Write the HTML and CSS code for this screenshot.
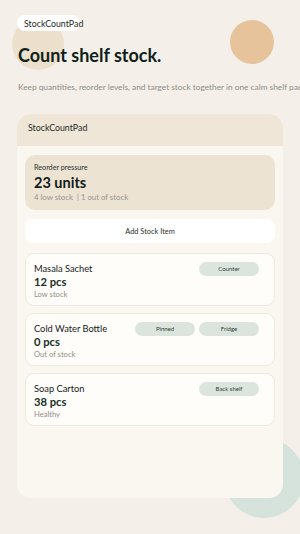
FILE: index.html
```html
<!DOCTYPE html>
<html>
<head>
<meta charset="utf-8">
<link rel="stylesheet" href="styles.css">
</head>
<body>
<div class="deco deco-a"></div>
<div class="deco deco-b"></div>
<div class="deco deco-c"></div>
<main class="page">
  <span class="brand">StockCountPad</span>
  <h1 class="title">Count shelf stock.</h1>
  <p class="lead">Keep quantities, reorder levels, and target stock together in one calm shelf pad.</p>
  <section class="card">
    <header class="card-head">StockCountPad</header>
    <div class="card-body">
      <div class="summary">
        <div class="summary-label">Reorder pressure</div>
        <div class="summary-value">23 units</div>
        <div class="summary-meta">4 low stock &nbsp;| 1 out of stock</div>
      </div>
      <button class="add-btn">Add Stock Item</button>
      <div class="item">
        <div class="item-info">
          <div class="item-name">Masala Sachet</div>
          <div class="item-qty">12 pcs</div>
          <div class="item-status">Low stock</div>
        </div>
        <div class="chips"><span class="chip">Counter</span></div>
      </div>
      <div class="item">
        <div class="item-info">
          <div class="item-name">Cold Water Bottle</div>
          <div class="item-qty">0 pcs</div>
          <div class="item-status">Out of stock</div>
        </div>
        <div class="chips"><span class="chip">Pinned</span><span class="chip">Fridge</span></div>
      </div>
      <div class="item">
        <div class="item-info">
          <div class="item-name">Soap Carton</div>
          <div class="item-qty">38 pcs</div>
          <div class="item-status">Healthy</div>
        </div>
        <div class="chips"><span class="chip">Back shelf</span></div>
      </div>
    </div>
  </section>
</main>
</body>
</html>
```
FILE: styles.css
```css
* { box-sizing: border-box; }
html, body {
  margin: 0;
  padding: 0;
  width: 300px;
  height: 534px;
  overflow: hidden;
}
body {
  background: #f4f0e9;
  font-family: Lato, "Noto Sans", sans-serif;
  color: #16211c;
  position: relative;
}
.deco {
  position: absolute;
  border-radius: 50%;
  z-index: 0;
}
.deco-a { left: 12px; top: 18px; width: 52px; height: 52px; background: #ecdfcc; }
.deco-b { left: 230px; top: 20px; width: 44px; height: 44px; background: #e6c39b; }
.deco-c { left: 224px; top: 438px; width: 80px; height: 80px; background: #d6e3dc; }
.page {
  position: relative;
  z-index: 1;
  padding: 15px 17px 0;
  display: flex;
  flex-direction: column;
  align-items: flex-start;
}
.brand {
  display: block;
  width: 63px;
  white-space: nowrap;
  background: #ffffff;
  border-radius: 8px;
  height: 16px;
  line-height: 17px;
  padding: 0 0 0 7px;
  font-size: 8.8px;
  color: #1d2a24;
}
.title {
  margin: 11px 0 0 1px;
  font-size: 18px;
  line-height: 26px;
  font-weight: 700;
  color: #0f1f19;
  letter-spacing: 0;
}
.lead {
  margin: 13px 0 0 1px;
  font-size: 8.3px;
  line-height: 12px;
  color: #8d8c84;
  white-space: nowrap;
}
.card {
  margin-top: 21px;
  width: 266px;
  height: 384px;
  border-radius: 14px;
  background: #faf7f1;
  overflow: hidden;
  flex-shrink: 0;
}
.card-head {
  height: 32px;
  background: #f0e6d8;
  padding: 8px 11px 0;
  font-size: 8.8px;
  line-height: 12px;
  color: #1d2a24;
}
.card-body {
  padding: 9px 8px;
  display: flex;
  flex-direction: column;
}
.summary {
  background: #ede3d3;
  border-radius: 10px;
  height: 55px;
  padding: 8px 9px 0;
}
.summary-label {
  font-size: 7.2px;
  line-height: 10px;
  color: #2a322d;
}
.summary-value {
  font-size: 14.5px;
  line-height: 18px;
  font-weight: 700;
  color: #0f1a15;
  margin-top: 1px;
}
.summary-meta {
  font-size: 7.8px;
  line-height: 10px;
  color: #95948c;
}
.add-btn {
  margin-top: 9px;
  height: 24px;
  border: none;
  border-radius: 8px;
  background: #ffffff;
  font-family: inherit;
  font-size: 7.4px;
  color: #2a322d;
  padding: 0;
}
.item {
  margin-top: 7px;
  height: 53px;
  background: #fffdf9;
  border: 1px solid #efe8dd;
  border-radius: 9px;
  display: flex;
  justify-content: space-between;
  align-items: flex-start;
  padding: 8px 15px 0 8px;
}
.add-btn + .item { margin-top: 10px; }
.item-name {
  font-size: 9.3px;
  line-height: 13px;
  color: #16211c;
}
.item-qty {
  font-size: 11.2px;
  line-height: 14px;
  font-weight: 700;
  color: #173026;
}
.item-status {
  font-size: 7.6px;
  line-height: 10px;
  color: #8f8e86;
}
.chips {
  display: flex;
  gap: 4px;
}
.chip {
  width: 60px;
  height: 14px;
  border-radius: 7px;
  background: #dbe5de;
  font-size: 6px;
  line-height: 14px;
  text-align: center;
  color: #2f3a34;
}
```
